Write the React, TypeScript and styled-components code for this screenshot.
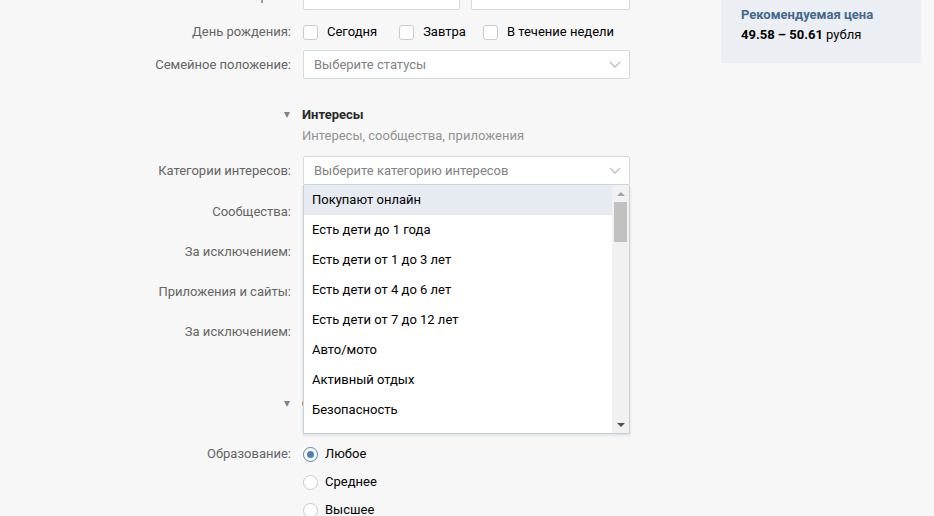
import { FC } from 'react';
import styled, { createGlobalStyle } from 'styled-components';

const GlobalStyle = createGlobalStyle`
  body {
    margin: 0;
    background: #f7f7f7;
    font-family: Roboto, "Noto Sans", Arial, sans-serif;
    font-size: 13px;
    color: #000;
    overflow: hidden;
  }
`;

const Page = styled.div`
  display: flex;
  align-items: flex-start;
  margin-top: -19px;
  padding-left: 131px;
`;

const Form = styled.div`
  display: flex;
  flex-direction: column;
  width: 499px;
`;

const Row = styled.div<{ $mt?: number; $h?: number; $top?: boolean }>`
  display: grid;
  grid-template-columns: 160px 1fr;
  column-gap: 12px;
  align-items: ${p => (p.$top ? 'start' : 'center')};
  margin-top: ${p => p.$mt ?? 0}px;
  min-height: ${p => p.$h ?? 29}px;
`;

const Label = styled.div`
  text-align: right;
  color: #656565;
  line-height: 20px;
  white-space: nowrap;
`;

const Control = styled.div`
  position: relative;
  display: flex;
  align-items: center;
  gap: 11px;
`;

const SelectBox = styled.div<{ $w?: number }>`
  box-sizing: border-box;
  height: 29px;
  width: ${p => (p.$w ? `${p.$w}px` : '100%')};
  display: flex;
  align-items: center;
  justify-content: space-between;
  padding: 0 8px 0 10px;
  background: #fff;
  border: 1px solid #d3d9de;
  border-radius: 2px;
`;

const Placeholder = styled.span`
  color: #828282;
`;

const Chevron: FC = () => (
  <svg width="12" height="7" viewBox="0 0 12 7">
    <polyline points="1,1 6,6 11,1" fill="none" stroke="#b5bdc6" strokeWidth="1.3" />
  </svg>
);

const TextInput = styled.input`
  box-sizing: border-box;
  width: 100%;
  height: 30px;
  border: 1px solid #d3d9de;
  border-radius: 2px;
  background: #fff;
  padding: 0 10px;
  font: inherit;
`;

const CheckGroup = styled.div`
  display: flex;
  align-items: center;
`;

const CheckItem = styled.label<{ $mr?: number }>`
  display: flex;
  align-items: center;
  gap: 9px;
  line-height: 20px;
  color: #000;
  margin-right: ${p => p.$mr ?? 0}px;
`;

const CheckBox = styled.span`
  box-sizing: border-box;
  width: 15px;
  height: 15px;
  border: 1px solid #c5ccd4;
  border-radius: 3px;
  background: #fff;
`;

const Radio = styled.span<{ $on?: boolean }>`
  box-sizing: border-box;
  width: 15px;
  height: 15px;
  border-radius: 50%;
  border: 1px solid ${p => (p.$on ? '#5181b8' : '#c5ccd4')};
  background: #fff;
  display: flex;
  align-items: center;
  justify-content: center;
  &::after {
    content: '';
    display: ${p => (p.$on ? 'block' : 'none')};
    width: 7px;
    height: 7px;
    border-radius: 50%;
    background: #5181b8;
  }
`;

const RadioItem = styled.label`
  display: flex;
  align-items: center;
  gap: 7px;
  line-height: 20px;
`;

const RadioList = styled.div`
  display: flex;
  flex-direction: column;
  gap: 8px;
`;

const Triangle = styled.div`
  display: flex;
  justify-content: flex-end;
  padding-right: 1px;
  &::before {
    content: '';
    border-left: 3.5px solid transparent;
    border-right: 3.5px solid transparent;
    border-top: 6px solid #828282;
  }
`;

const SectionTitle = styled.div`
  font-weight: 700;
  color: #2a2a2a;
  line-height: 20px;
  margin-left: -1px;
`;

const SectionHint = styled.div`
  color: #939393;
  line-height: 20px;
  margin-left: -1px;
`;

/* open dropdown of the interest categories */
const Dropdown = styled.div`
  position: absolute;
  z-index: 5;
  left: 0;
  right: 0;
  top: 100%;
  height: 249px;
  box-sizing: border-box;
  background: #fff;
  border: 1px solid #c5d0db;
  border-top: none;
  box-shadow: 0 1px 3px rgba(0, 0, 0, 0.12);
  display: flex;
  overflow: hidden;
`;

const Options = styled.div`
  flex: 1;
  display: flex;
  flex-direction: column;
`;

const Option = styled.div<{ $active?: boolean }>`
  flex: none;
  height: 30px;
  line-height: 30px;
  padding-left: 8px;
  background: ${p => (p.$active ? '#e5ebf1' : '#fff')};
  color: #000;
  white-space: nowrap;
`;

const ScrollTrack = styled.div`
  width: 17px;
  background: #f1f1f1;
  display: flex;
  flex-direction: column;
  align-items: center;
`;

const ScrollArrow = styled.div<{ $down?: boolean; $dim?: boolean }>`
  height: 17px;
  width: 17px;
  display: flex;
  align-items: center;
  justify-content: center;
  &::before {
    content: '';
    border-left: 4px solid transparent;
    border-right: 4px solid transparent;
    ${p =>
      p.$down
        ? `border-top: 4px solid ${p.$dim ? '#a3a3a3' : '#505050'};`
        : `border-bottom: 4px solid ${p.$dim ? '#a3a3a3' : '#505050'};`}
  }
`;

const ScrollThumb = styled.div`
  width: 13px;
  height: 40px;
  background: #c1c1c1;
`;

const ScrollSpace = styled.div`
  flex: 1;
`;

const Side = styled.div`
  margin-left: 91px;
  width: 200px;
  box-sizing: border-box;
  padding: 24px 20px 18px;
  background: #ebeef2;
  line-height: 20px;
`;

const SideTitle = styled.div`
  font-weight: 700;
  color: #45688e;
`;

const Price = styled.div`
  color: #000;
  & b {
    font-weight: 700;
  }
`;

const CATEGORIES = [
  'Покупают онлайн',
  'Есть дети до 1 года',
  'Есть дети от 1 до 3 лет',
  'Есть дети от 4 до 6 лет',
  'Есть дети от 7 до 12 лет',
  'Авто/мото',
  'Активный отдых',
  'Безопасность',
  'Бизнес',
];

const App: FC = () => {
  return (
    <>
      <GlobalStyle />
      <Page>
        <Form>
          <Row>
            <Label>Возраст:</Label>
            <Control>
              <SelectBox $w={157}>
                <Placeholder>Любой</Placeholder>
                <Chevron />
              </SelectBox>
              <SelectBox $w={159}>
                <Placeholder>Любой</Placeholder>
                <Chevron />
              </SelectBox>
            </Control>
          </Row>

          <Row $mt={12} $h={20}>
            <Label>День рождения:</Label>
            <CheckGroup>
              <CheckItem $mr={22}><CheckBox />Сегодня</CheckItem>
              <CheckItem $mr={17}><CheckBox />Завтра</CheckItem>
              <CheckItem><CheckBox />В течение недели</CheckItem>
            </CheckGroup>
          </Row>

          <Row $mt={8}>
            <Label>Семейное положение:</Label>
            <SelectBox>
              <Placeholder>Выберите статусы</Placeholder>
              <Chevron />
            </SelectBox>
          </Row>

          <Row $mt={26} $h={20}>
            <Triangle />
            <SectionTitle>Интересы</SectionTitle>
          </Row>
          <Row $mt={1} $h={20}>
            <span />
            <SectionHint>Интересы, сообщества, приложения</SectionHint>
          </Row>

          <Row $mt={10}>
            <Label>Категории интересов:</Label>
            <Control>
              <SelectBox>
                <Placeholder>Выберите категорию интересов</Placeholder>
                <Chevron />
              </SelectBox>
              <Dropdown>
                <Options>
                  {CATEGORIES.map((c, i) => (
                    <Option key={c} $active={i === 0}>{c}</Option>
                  ))}
                </Options>
                <ScrollTrack>
                  <ScrollArrow $dim />
                  <ScrollThumb />
                  <ScrollSpace />
                  <ScrollArrow $down />
                </ScrollTrack>
              </Dropdown>
            </Control>
          </Row>

          <Row $mt={12} $h={30}>
            <Label>Сообщества:</Label>
            <TextInput placeholder="Начните вводить название" />
          </Row>
          <Row $mt={10} $h={30}>
            <Label>За исключением:</Label>
            <TextInput placeholder="Начните вводить название" />
          </Row>
          <Row $mt={10} $h={30}>
            <Label>Приложения и сайты:</Label>
            <TextInput placeholder="Начните вводить название" />
          </Row>
          <Row $mt={10} $h={30}>
            <Label>За исключением:</Label>
            <TextInput placeholder="Начните вводить название" />
          </Row>

          <Row $mt={47} $h={20}>
            <Triangle />
            <SectionTitle>Образование и работа</SectionTitle>
          </Row>

          <Row $mt={30} $h={20} $top>
            <Label>Образование:</Label>
            <RadioList>
              <RadioItem><Radio $on />Любое</RadioItem>
              <RadioItem><Radio />Среднее</RadioItem>
              <RadioItem><Radio />Высшее</RadioItem>
            </RadioList>
          </Row>
        </Form>

        <Side>
          <SideTitle>Рекомендуемая цена</SideTitle>
          <Price><b>49.58 – 50.61</b> рубля</Price>
        </Side>
      </Page>
    </>
  );
};

export default App;
